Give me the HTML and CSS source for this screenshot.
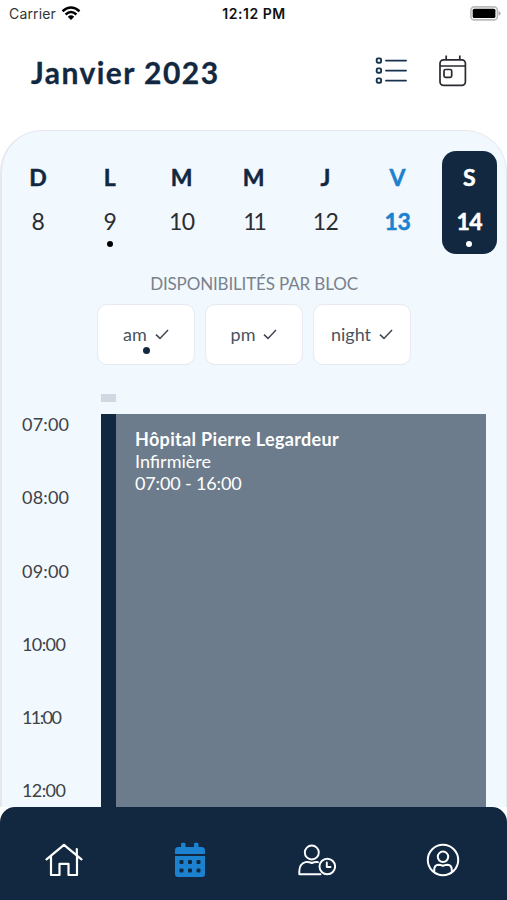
FILE: index.html
```html
<!DOCTYPE html>
<html lang="fr">
<head>
<meta charset="utf-8">
<title>Calendrier</title>
<link rel="stylesheet" href="styles.css">
</head>
<body>
<div class="app">
  <div class="status">
    <div class="carrier"><span class="carrier-name">Carrier</span>
      <svg width="20" height="14" viewBox="0 0 20 14" fill="none" stroke="#000" stroke-width="2.5"><path d="M1.5 5.2Q10-2.2 18.5 5.2M4.6 8.5Q10 3.6 15.4 8.5"/><path d="M6.8 10.7Q10 7.8 13.2 10.7L10 14Z" fill="#000" stroke="none"/></svg>
    </div>
    <div class="clock">12:12 PM</div>
    <svg class="battery" width="31" height="15" viewBox="0 0 31 15"><rect x=".9" y=".9" width="26.5" height="13" rx="3.5" fill="#fff" stroke="#bbb" stroke-width="1.6"/><rect x="2.7" y="2.7" width="22.7" height="9.4" rx="1.5" fill="#000"/><path d="M28.6 5q2 1 2 2.4t-2 2.4z" fill="#aaa"/></svg>
  </div>
  <header class="header">
    <h1 class="title">Janvier 2023</h1>
    <svg class="list-icon" width="33" height="28" viewBox="0 0 33 28" fill="none" stroke="#17324f" stroke-width="1.9"><rect x="1.7" y="1.4" width="4.4" height="4.4" rx="1.3"/><rect x="1.7" y="11.4" width="4.4" height="4.4" rx="1.3"/><rect x="1.7" y="21.4" width="4.4" height="4.4" rx="1.3"/><path d="M11 3.6H31M11 13.6H31M11 23.6H31" stroke-linecap="round"/></svg>
    <svg class="today-icon" width="28" height="32" viewBox="0 0 28 32" fill="none" stroke="#2c2930" stroke-width="1.7"><rect x="1" y="4.8" width="25.4" height="25.5" rx="3.5"/><path d="M1 11H26.4M7.2.5V5M20.8.5V5"/><rect x="5" y="14.5" width="7.7" height="7.8" rx="1.5"/></svg>
  </header>
  <main class="panel">
    <div class="week">
      <div class="day"><b>D</b><span>8</span></div>
      <div class="day"><b>L</b><span>9</span><i class="dot"></i></div>
      <div class="day"><b>M</b><span>10</span></div>
      <div class="day"><b>M</b><span class="tight">11</span></div>
      <div class="day"><b>J</b><span>12</span></div>
      <div class="day today"><b>V</b><span>13</span></div>
      <div class="day selected"><b>S</b><span>14</span><i class="dot"></i></div>
    </div>
    <h2 class="subtitle">DISPONIBILITÉS PAR BLOC</h2>
    <div class="blocks">
      <div class="block"><span>am</span><svg width="14" height="11" viewBox="0 0 14 11"><path d="M1 5.6L5 9.4L13 1"/></svg><i class="dot"></i></div>
      <div class="block"><span>pm</span><svg width="14" height="11" viewBox="0 0 14 11"><path d="M1 5.6L5 9.4L13 1"/></svg></div>
      <div class="block"><span>night</span><svg width="14" height="11" viewBox="0 0 14 11"><path d="M1 5.6L5 9.4L13 1"/></svg></div>
    </div>
    <div class="schedule">
      <div class="hours"><div>07:00</div><div>08:00</div><div>09:00</div><div class="narrow">10:00</div><div class="narrower">11:00</div><div class="narrow">12:00</div></div>
      <div class="track">
        <div class="previous"></div>
        <article class="event">
          <h3 class="place">Hôpital Pierre Legardeur</h3>
          <p class="role">Infirmière</p>
          <p class="time">07:00 - 16:00</p>
        </article>
      </div>
    </div>
  </main>
  <nav class="nav">
    <a><svg width="38" height="34" viewBox="0 0 38 34" fill="none" stroke="#fff" stroke-width="2.2" stroke-linecap="round" stroke-linejoin="round"><path d="M1.5 16.3L19 1.8L36.5 16.3M6 13.5V32H14.5V20.8H23.5V32H32V13.5M31.8 6V11.8"/></svg></a>
    <a><svg width="32" height="36" viewBox="0 0 32 36"><path fill="#1c82cf" d="M4 5H7V2q0-1.3 1.3-1.3H10Q11.5.7 11.5 2V5H20V2Q20 .7 21.5.7H23Q24.5.7 24.5 2V5H27.5Q31 5 31 8.5V12H1V8.5Q1 5 4 5ZM1 14H31V32Q31 35 28 35H4Q1 35 1 32Z"/><g fill="#122841"><rect x="5.5" y="18" width="4" height="4" rx="1"/><rect x="14" y="18" width="4" height="4" rx="1"/><rect x="22.5" y="18" width="4" height="4" rx="1"/><rect x="5.5" y="26.5" width="4" height="4" rx="1"/><rect x="14" y="26.5" width="4" height="4" rx="1"/><rect x="22.5" y="26.5" width="4" height="4" rx="1"/></g></svg></a>
    <a><svg width="38" height="32" viewBox="0 0 38 32" fill="none" stroke="#fff" stroke-width="1.9" stroke-linecap="round" stroke-linejoin="round"><circle cx="13.8" cy="8.5" r="7"/><path d="M20 18.2Q17.5 17.5 13.8 19Q10 17.5 7.5 18.2Q1.5 20 1.3 27V30.3H22.5"/><circle cx="29.3" cy="22.5" r="7.8"/><path d="M28.8 18.5V23H32.5"/></svg></a>
    <a><svg width="34" height="34" viewBox="0 0 34 34" fill="none" stroke="#fff" stroke-width="2"><circle cx="17" cy="17" r="15.2"/><circle cx="17" cy="13.8" r="5.2"/><path d="M8.2 29V26.5Q8.5 22 12.5 21.8Q14 21.8 17 22.8Q20 21.8 21.5 21.8Q25.5 22 25.8 26.5V29"/></svg></a>
  </nav>
</div>
</body>
</html>
```
FILE: styles.css
```css
* { box-sizing: border-box; }
body { margin: 0; background: #fff; font-family: Lato, sans-serif; color: #2b2d31; }
h1, h2, h3, p { margin: 0; }
.app { width: 507px; height: 900px; overflow: hidden; display: flex; flex-direction: column; }
.status { height: 28px; flex: none; display: grid; grid-template-columns: 1fr auto 1fr; align-items: center; padding: 0 6px 0 9px; font-family: Inter, sans-serif; }
.carrier { display: flex; align-items: center; gap: 5px; font-size: 14px; line-height: 20px; color: #333; letter-spacing: .15px; margin-top: -1px; }
.carrier svg { margin-top: -2px; }
.clock { font-size: 14px; line-height: 20px; font-weight: 600; color: #111; letter-spacing: .55px; margin: -1px 0 0 -2px; }
.battery { justify-self: end; margin-top: -2px; }
.header { height: 102px; flex: none; display: flex; align-items: flex-start; padding: 25px 40px 0 31px; }
.title { flex: 1; font-size: 30px; line-height: 38px; font-weight: 700; color: #122841; letter-spacing: 1.45px; -webkit-text-stroke: .3px #122841; }
.list-icon { margin: 4px 31px 0 0; }
.today-icon { margin: 2px 0 0; }
.panel { height: 677px; flex: none; display: flex; flex-direction: column; background: #f1f8fe; border: solid #e7e8ee; border-width: 1.5px 1px 0 2px; border-radius: 42px 42px 0 0; overflow: hidden; }
.week { display: flex; padding-top: 20px; height: 123px; }
.day { width: 71.9px; height: 103px; display: flex; flex-direction: column; align-items: center; padding-top: 12px; font-size: 23px; line-height: 28px; }
.day b { color: #122841; -webkit-text-stroke: .5px; }
.day span { margin-top: 16px; letter-spacing: -.6px; }
.day .tight { letter-spacing: -3px; }
.day.today, .today b { color: #1c82cf; }
.today span, .selected span { font-weight: 700; -webkit-text-stroke: .5px; letter-spacing: -.4px; }
.selected { width: 55px; margin-left: 8.5px; background: #122841; color: #fff; border-radius: 14px; }
.selected b { color: #fff; }
.dot { flex: none; width: 6px; height: 6px; border-radius: 50%; background: #000; margin-top: 6px; }
.selected .dot { background: #fff; }
.subtitle { margin-top: 19px; text-align: center; font-size: 17px; line-height: 22px; font-weight: 400; color: #79818c; letter-spacing: -.15px; }
.blocks { display: flex; gap: 10px; justify-content: center; margin-top: 9px; }
.block { position: relative; width: 98px; height: 61px; display: flex; align-items: center; justify-content: center; gap: 8px; background: #fff; border: 1px solid #e6e9ef; border-radius: 10px; font-size: 18px; color: #4b5361; padding-bottom: 2px; }
.block svg { fill: none; stroke: #404753; stroke-width: 1.5; margin-top: 2px; }
.block .dot { position: absolute; left: 45px; top: 42px; width: 7px; height: 7px; margin: 0; background: #122841; }
.schedule { flex: 1; display: grid; grid-template-columns: 99px 385px; margin-top: 29px; }
.hours { padding: 18px 0 0 20px; font-size: 18px; line-height: 24px; color: #3d4248; letter-spacing: .2px; }
.hours div { height: 73.3px; }
.hours .narrow { letter-spacing: -.6px; }
.hours .narrower { letter-spacing: -1.6px; }
.track { display: flex; flex-direction: column; }
.previous { width: 15px; height: 8px; background: #d1d8e1; }
.event { flex: 1; margin-top: 12px; border-left: 15px solid #122841; background: #6c7c8c; color: #fff; padding: 14px 19px; font-size: 18px; line-height: 22px; }
.place { font-size: 18px; font-weight: 700; letter-spacing: .33px; }
.time { letter-spacing: -.15px; }
.nav { height: 93px; flex: none; display: flex; padding: 0 1px; background: #122841; border-radius: 15px 15px 0 0; }
.nav a { flex: 1; display: flex; align-items: center; justify-content: center; padding-top: 13px; }
```
